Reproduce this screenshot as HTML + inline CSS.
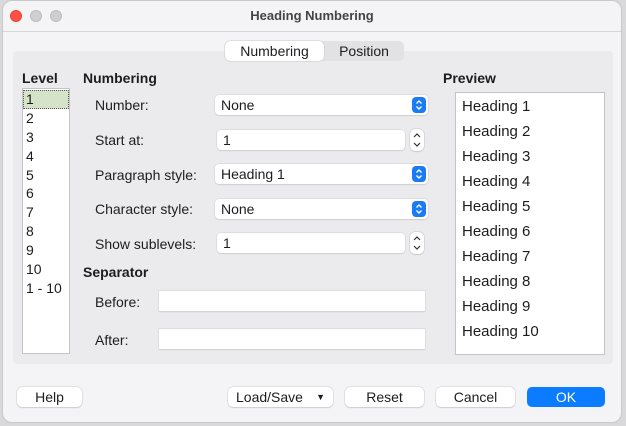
<!DOCTYPE html>
<html><head><meta charset="utf-8"><style>
*{box-sizing:border-box;margin:0;padding:0}
body{width:626px;height:426px;background:#d9d9db;font-family:"Liberation Sans",sans-serif;font-size:14px;color:#1d1d1f;position:relative;overflow:hidden}
.win{position:absolute;left:2px;top:0;width:620px;height:423px;background:#f4f3f6;border-radius:10px;border:1px solid #c9c8cb;overflow:hidden}
.abs{position:absolute}
.title{left:0;top:0;width:100%;height:31px;border-bottom:1px solid #d6d5d8;text-align:center;line-height:30px;font-weight:bold;font-size:13px;color:#444}
.dot{width:12px;height:12px;border-radius:50%;top:9px;background:#cfced1;border:1px solid #bdbcbf}
.panel{left:10px;top:50px;width:600px;height:313px;background:#ebeaed;border-radius:4px}
.b{font-weight:bold}
.field{background:#fff;border-radius:4px;box-shadow:0 0 0 0.5px #cfcfd2,0 1px 1px rgba(0,0,0,.12);height:20px;line-height:20px;padding-left:6px}
.sel{width:213px}
.blue{position:absolute;right:2px;top:2px;width:14px;height:16px;background:#1a7cf5;border-radius:4px}
.blue svg,.spin svg{display:block}
.spin{width:14px;height:22px;background:#fff;border-radius:5px;box-shadow:0 0 0 .5px #c5c5c8,0 1px 1px rgba(0,0,0,.12)}
.btn{top:386px;height:20px;background:#fff;border-radius:5px;box-shadow:0 0 0 .5px #cfcfd2,0 1px 1px rgba(0,0,0,.18);text-align:center;line-height:20px;font-size:14px}
.list div{height:18.9px;line-height:18.9px;padding-left:3px}
.prev div{height:25px;line-height:25px;font-size:15px}
</style></head><body>
<div class="win">
<div class="abs title">Heading Numbering</div>
<div class="abs dot" style="left:7px;background:#fe4f45;border-color:#e2463d"></div>
<div class="abs dot" style="left:27px"></div>
<div class="abs dot" style="left:47px"></div>
<div class="abs panel"></div>
<div class="abs" style="left:222px;top:40px;width:179px;height:20px;background:#e2e1e4;border-radius:5px"></div>
<div class="abs" style="left:222px;top:40px;width:99px;height:20px;background:#fff;border-radius:5px;box-shadow:0 0 0 .5px #c8c8cb;text-align:center;line-height:20px">Numbering</div>
<div class="abs" style="left:321px;top:40px;width:80px;height:20px;text-align:center;line-height:20px">Position</div>

<div class="abs b" style="left:19px;top:69px">Level</div>
<div class="abs list" style="left:19px;top:87px;width:48px;height:266px;background:#fff;border:1px solid #c4c3c6;padding-top:1px">
<div style="background:#d5e4c8;outline:1px dotted #555;outline-offset:-1px">1</div><div>2</div><div>3</div><div>4</div><div>5</div><div>6</div><div>7</div><div>8</div><div>9</div><div>10</div><div>1 - 10</div></div>

<div class="abs b" style="left:80px;top:69px">Numbering</div>
<div class="abs" style="left:92px;top:96px">Number:</div>
<div class="abs field sel" style="left:212px;top:94px">None<div class="blue"><svg width="14" height="16"><path d="M4.5 6.5L7 4L9.5 6.5M4.5 9.5L7 12L9.5 9.5" fill="none" stroke="#fff" stroke-width="1.4"/></svg></div></div>
<div class="abs" style="left:92px;top:131px">Start at:</div>
<div class="abs field" style="left:214px;top:129px;width:188px">1</div>
<div class="abs spin" style="left:407px;top:128px"><svg width="14" height="22"><path d="M4 8L7 5L10 8M4 14L7 17L10 14" fill="none" stroke="#333" stroke-width="1.2"/></svg></div>
<div class="abs" style="left:92px;top:166px">Paragraph style:</div>
<div class="abs field sel" style="left:212px;top:163px">Heading 1<div class="blue"><svg width="14" height="16"><path d="M4.5 6.5L7 4L9.5 6.5M4.5 9.5L7 12L9.5 9.5" fill="none" stroke="#fff" stroke-width="1.4"/></svg></div></div>
<div class="abs" style="left:92px;top:200px">Character style:</div>
<div class="abs field sel" style="left:212px;top:198px">None<div class="blue"><svg width="14" height="16"><path d="M4.5 6.5L7 4L9.5 6.5M4.5 9.5L7 12L9.5 9.5" fill="none" stroke="#fff" stroke-width="1.4"/></svg></div></div>
<div class="abs" style="left:92px;top:235px">Show sublevels:</div>
<div class="abs field" style="left:214px;top:232px;width:188px">1</div>
<div class="abs spin" style="left:407px;top:231px"><svg width="14" height="22"><path d="M4 8L7 5L10 8M4 14L7 17L10 14" fill="none" stroke="#333" stroke-width="1.2"/></svg></div>

<div class="abs b" style="left:80px;top:263px">Separator</div>
<div class="abs" style="left:92px;top:293px">Before:</div>
<div class="abs field" style="left:156px;top:290px;width:266px;border-radius:0"></div>
<div class="abs" style="left:92px;top:331px">After:</div>
<div class="abs field" style="left:156px;top:328px;width:266px;border-radius:0"></div>

<div class="abs b" style="left:440px;top:69px">Preview</div>
<div class="abs prev" style="left:452px;top:91px;width:150px;height:263px;background:#fff;border:1px solid #c4c3c6;padding:1px 0 0 6px">
<div>Heading 1</div><div>Heading 2</div><div>Heading 3</div><div>Heading 4</div><div>Heading 5</div><div>Heading 6</div><div>Heading 7</div><div>Heading 8</div><div>Heading 9</div><div>Heading 10</div></div>

<div class="abs btn" style="left:14px;width:65px">Help</div>
<div class="abs btn" style="left:225px;width:105px;text-align:left;padding-left:8px">Load/Save <span style="position:absolute;right:8px;font-size:9px">▼</span></div>
<div class="abs btn" style="left:342px;width:79px">Reset</div>
<div class="abs btn" style="left:433px;width:79px">Cancel</div>
<div class="abs btn" style="left:524px;width:78px;background:#0b7cff;color:#fff;box-shadow:none">OK</div>
</div>
</body></html>
